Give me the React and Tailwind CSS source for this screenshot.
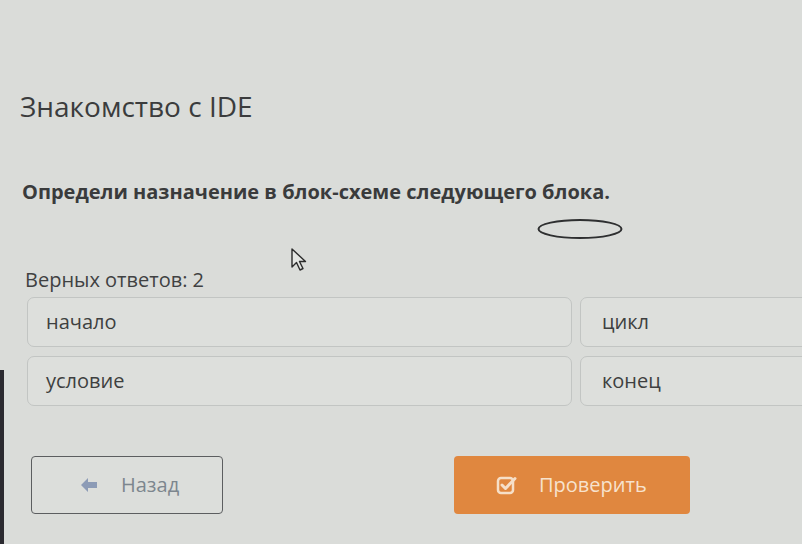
import React from 'react';

const font = { fontFamily: '"Open Sans", "Noto Sans", sans-serif' };

const options = [
    { id: 1, text: 'начало' },
    { id: 2, text: 'цикл' },
    { id: 3, text: 'условие' },
    { id: 4, text: 'конец' },
];

const BackArrow = () => (
    <svg width="18" height="16" viewBox="0 0 18 16" className="shrink-0">
        <path d="M8 1 L1 8 L8 15 L8 11 L17 11 L17 5 L8 5 Z" fill="#8c9bb6" strokeLinejoin="round" />
    </svg>
);

const CheckSquare = () => (
    <svg width="22" height="20" viewBox="0 0 22 20" className="shrink-0">
        <rect x="2" y="3" width="15" height="15" rx="3" fill="none" stroke="#f6dfc8" strokeWidth="2.5" />
        <path d="M6 10 L9.5 13.5 L19 3.5" fill="none" stroke="#f6dfc8" strokeWidth="3" strokeLinecap="round" strokeLinejoin="round" />
    </svg>
);

const Cursor = () => (
    <svg width="20" height="26" viewBox="0 0 20 26" className="absolute left-[290px] top-[247px]">
        <path d="M2 2 L2 20 L6.5 15.5 L10 23 L13 21.5 L9.5 14.5 L15.5 14.5 Z" fill="#e4e6e3" stroke="#2c2c2c" strokeWidth="1.4" strokeLinejoin="round" />
    </svg>
);

const App = () => {
    return (
        <div className="relative w-[802px] h-[544px] overflow-hidden bg-[#dadcd9] text-[#393a3b]" style={font}>
            <div className="flex flex-col pl-[20px] pt-[88px]">
                <h1 className="text-[28px] leading-[36px] font-normal text-[#3b3c3d]">Знакомство с IDE</h1>

                <p className="mt-[54px] pl-[2px] text-[20px] leading-[27px] font-bold text-[#3a3b3c]">
                    Определи назначение в блок-схеме следующего блока.
                </p>

                <div className="mt-[12px] flex pl-[516px]">
                    <svg width="88" height="24" viewBox="0 0 88 24">
                        <ellipse cx="44" cy="12" rx="41.5" ry="9" fill="none" stroke="#2e2f30" strokeWidth="2" />
                    </svg>
                </div>

                <div className="mt-[26px] pl-[5px] text-[20px] leading-[26px] text-[#404142]">Верных ответов: 2</div>

                <div className="mt-[4px] ml-[7px] grid grid-cols-[545px_300px] gap-x-[8px] gap-y-[9px]">
                    {options.map(o => (
                        <div
                            key={o.id}
                            className={`h-[50px] rounded-[7px] border border-[#c2c5c3] bg-[#dddfdc] flex text-[20px] text-[#3e3f40] ${o.id % 2 === 1 ? 'items-start pt-[9px] pl-[18px]' : 'items-center pl-[21px]'}`}
                        >
                            {o.text}
                        </div>
                    ))}
                </div>

                <div className="mt-[50px] flex items-start">
                    <button className="ml-[11px] w-[192px] h-[58px] rounded-[4px] border border-[#5c5e60] bg-[#dcdedb] flex items-center pl-[48px] gap-[23px] text-[20px] text-[#7d868e]">
                        <BackArrow />
                        <span>Назад</span>
                    </button>
                    <button className="ml-[231px] w-[236px] h-[58px] rounded-[4px] bg-[#e0873f] flex items-center pl-[42px] gap-[21px] text-[20px] text-[#f7e2cd]">
                        <CheckSquare />
                        <span>Проверить</span>
                    </button>
                </div>
            </div>

            <Cursor />
            <div className="absolute left-0 top-[370px] w-[4px] h-[174px] bg-[#2b2a30]"></div>
        </div>
    );
};

export default App;
